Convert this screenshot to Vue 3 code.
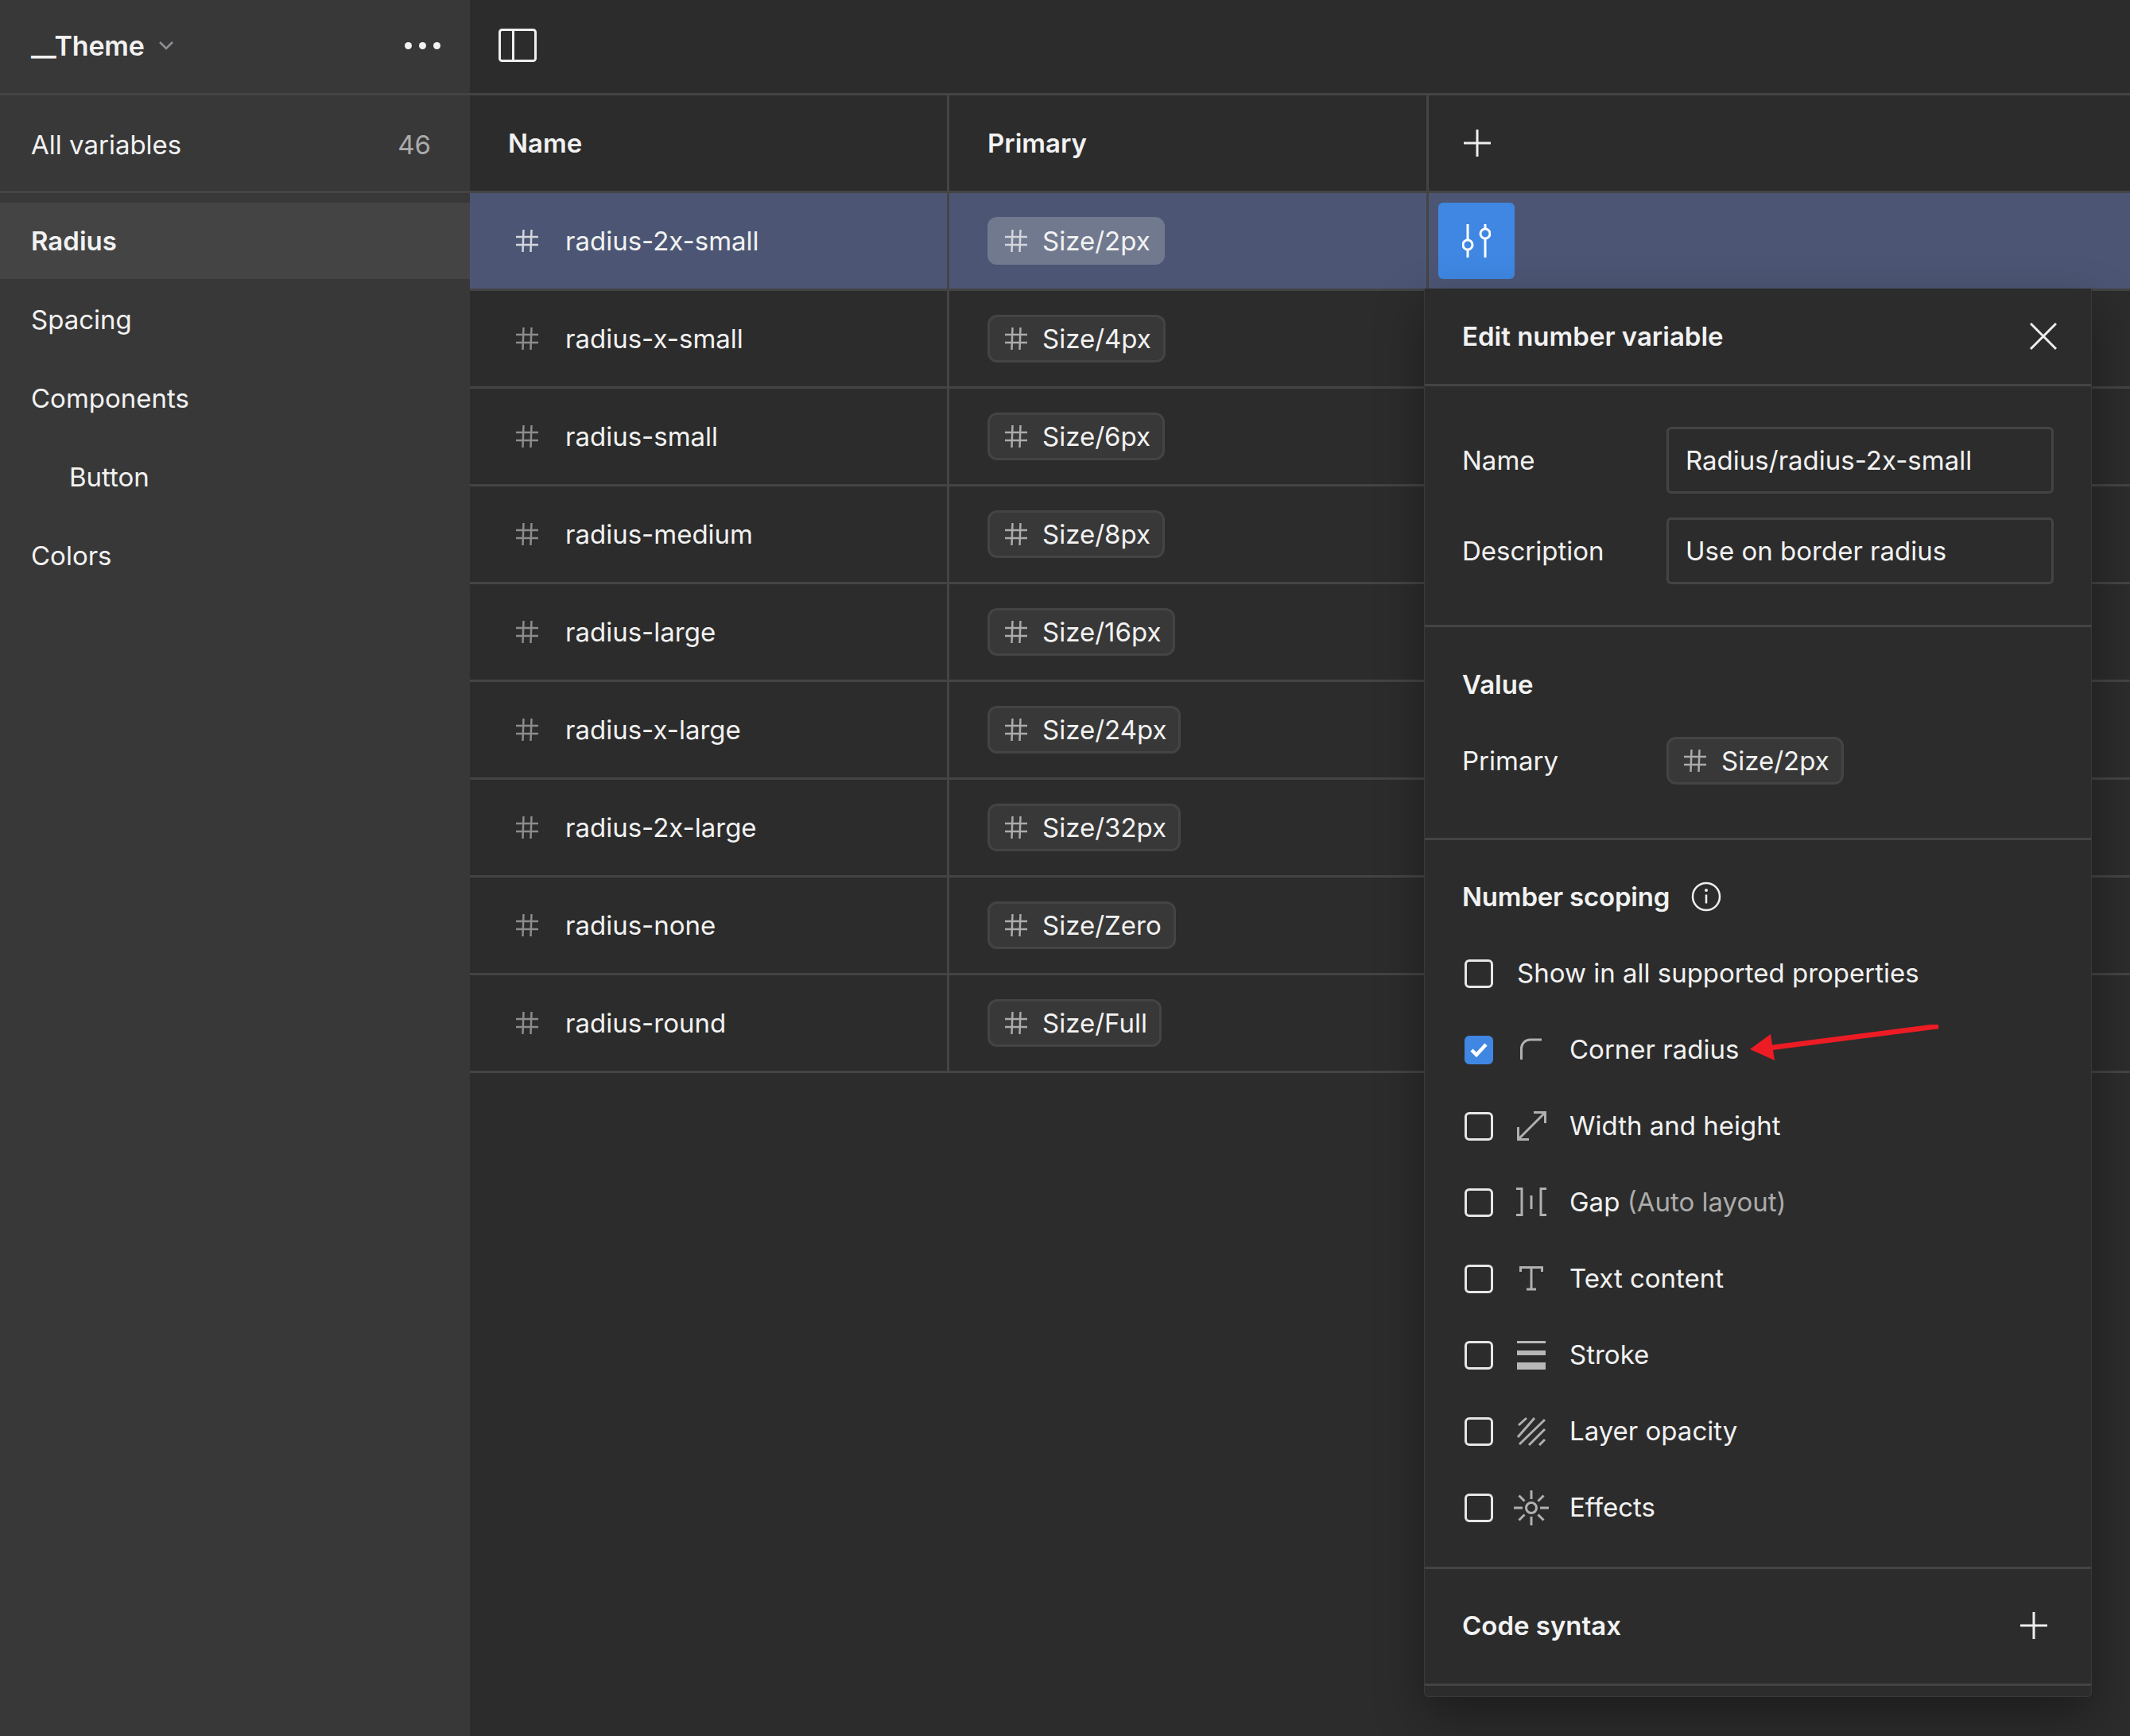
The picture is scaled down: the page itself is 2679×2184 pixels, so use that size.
<template>
  <div class="app">
    <aside class="sidebar">
      <div class="side-head">
        <span class="file-name">__Theme</span>
        <svg class="chevron" width="20" height="12" viewBox="0 0 20 12"><path d="M2 2l8 8 8-8" /></svg>
        <span class="dots"><i></i><i></i><i></i></span>
      </div>
      <div class="side-all">
        <span>All variables</span>
        <span class="count">46</span>
      </div>
      <nav class="nav">
        <div
          v-for="item in groups"
          :key="item.name"
          class="nav-item"
          :class="{ active: item.active, nested: item.nested }"
        >{{ item.name }}</div>
      </nav>
    </aside>

    <main class="main">
      <div class="topbar">
        <svg class="panel-icon" width="48" height="42" viewBox="0 0 48 42">
          <rect x="1.5" y="1.5" width="45" height="39" rx="3" />
          <path d="M18.5 1.5v39" />
        </svg>
      </div>

      <div class="row head">
        <div class="cell first"><b>Name</b></div>
        <div class="cell second"><b>Primary</b></div>
        <div class="cell third">
          <svg class="plus" width="34" height="34" viewBox="0 0 34 34"><path d="M17 0v34M0 17h34" /></svg>
        </div>
      </div>

      <div v-for="(v, i) in variables" :key="v.name" class="row" :class="{ selected: i === 0 }">
        <div class="cell first">
          <svg class="hash" width="30" height="30" viewBox="0 0 30 30"><path d="M10.5 1l-1 28M20.500 1l-1 28M1 10h28M1 20h28" /></svg>
          <span class="var-name">{{ v.name }}</span>
        </div>
        <div class="cell second">
          <span class="pill">
            <svg class="hash" width="30" height="30" viewBox="0 0 30 30"><path d="M10.5 1l-1 28M20.500 1l-1 28M1 10h28M1 20h28" /></svg>
            {{ v.value }}
          </span>
        </div>
        <div class="cell third">
          <button v-if="i === 0" class="edit-btn">
            <svg width="36" height="48" viewBox="0 0 36 48">
              <path d="M7 3v20M7 35v10M29 3v6M29 21v24" />
              <circle cx="7" cy="29" r="6" />
              <circle cx="29" cy="15" r="6" />
            </svg>
          </button>
        </div>
      </div>

      <section class="popup">
        <div class="pop-head">
          <b>Edit number variable</b>
          <svg class="close" width="34" height="34" viewBox="0 0 34 34"><path d="M1 1l32 32M33 1L1 33" /></svg>
        </div>

        <div class="pop-section fields">
          <div class="field">
            <label>Name</label>
            <div class="input">Radius/radius-2x-small</div>
          </div>
          <div class="field">
            <label>Description</label>
            <div class="input">Use on border radius</div>
          </div>
        </div>

        <div class="pop-section value">
          <b class="pop-title">Value</b>
          <div class="field">
            <label>Primary</label>
            <span class="pill">
              <svg class="hash" width="30" height="30" viewBox="0 0 30 30"><path d="M10.5 1l-1 28M20.500 1l-1 28M1 10h28M1 20h28" /></svg>
              Size/2px
            </span>
          </div>
        </div>

        <div class="pop-section scoping">
          <div class="pop-title scoping-title">
            <b>Number scoping</b>
            <svg class="info" width="38" height="38" viewBox="0 0 38 38">
              <circle cx="19" cy="19" r="17" />
              <path d="M19 16.500v11" />
              <circle class="dot" cx="19" cy="11" r="2" />
            </svg>
          </div>
          <div class="check-row show-all">
            <span class="check"></span>
            <span class="check-label">Show in all supported properties</span>
          </div>
          <div v-for="s in scopes" :key="s.label" class="check-row">
            <span class="check" :class="{ on: s.on }">
              <svg v-if="s.on" width="24" height="20" viewBox="0 0 24 20"><path d="M3 10l6 6L21 3" /></svg>
            </span>
            <svg class="scope-icon" width="48" height="48" viewBox="0 0 48 48">
              <template v-if="s.icon === 'corner'">
                <path d="M11.500 36V22a11 11 0 0 1 11-11H37" />
              </template>
              <template v-else-if="s.icon === 'size'">
                <path d="M8 40L40 8M27 6.500h14.500V20M7.500 25v15.500H21" />
              </template>
              <template v-else-if="s.icon === 'gap'">
                <path d="M5 6.500h7v33H5M24 15v17M43 6.500h-7v33h7" />
              </template>
              <template v-else-if="s.icon === 'text'">
                <path d="M10.500 15V9.500h27V15M24 9.500v27M18 37h12" />
              </template>
              <template v-else-if="s.icon === 'stroke'">
                <rect class="fill" x="6" y="6" width="36" height="3" />
                <rect class="fill" x="6" y="18" width="36" height="6" />
                <rect class="fill" x="6" y="33" width="36" height="9" />
              </template>
              <template v-else-if="s.icon === 'opacity'">
                <path d="M8 16L18 7M7 31L28 7M9 40L41 9M21 41L41 21M34 41l7-7" />
              </template>
              <template v-else>
                <circle cx="24" cy="24" r="6.500" />
                <path d="M24 2v11M24 35v11M2 24h11M35 24h11M8.500 8.500l7 7M32.500 32.500l7 7M39.500 8.500l-7 7M15.500 32.500l-7 7" />
              </template>
            </svg>
            <span class="check-label">{{ s.label }} <em v-if="s.note">{{ s.note }}</em></span>
          </div>
          <svg class="red-arrow" width="250" height="50" viewBox="0 0 250 50">
            <path class="shaft" d="M240 2L30 29" />
            <path class="head" d="M3 31L29 12l5 33z" />
          </svg>
        </div>

        <div class="pop-section code">
          <b>Code syntax</b>
          <svg class="plus" width="34" height="34" viewBox="0 0 34 34"><path d="M17 0v34M0 17h34" /></svg>
        </div>
      </section>
    </main>
  </div>
</template>

<script setup>
const groups = [
  { name: 'Radius', active: true },
  { name: 'Spacing' },
  { name: 'Components' },
  { name: 'Button', nested: true },
  { name: 'Colors' }
]

const variables = [
  { name: 'radius-2x-small', value: 'Size/2px' },
  { name: 'radius-x-small', value: 'Size/4px' },
  { name: 'radius-small', value: 'Size/6px' },
  { name: 'radius-medium', value: 'Size/8px' },
  { name: 'radius-large', value: 'Size/16px' },
  { name: 'radius-x-large', value: 'Size/24px' },
  { name: 'radius-2x-large', value: 'Size/32px' },
  { name: 'radius-none', value: 'Size/Zero' },
  { name: 'radius-round', value: 'Size/Full' }
]

const scopes = [
  { label: 'Corner radius', icon: 'corner', on: true },
  { label: 'Width and height', icon: 'size' },
  { label: 'Gap', note: '(Auto layout)', icon: 'gap' },
  { label: 'Text content', icon: 'text' },
  { label: 'Stroke', icon: 'stroke' },
  { label: 'Layer opacity', icon: 'opacity' },
  { label: 'Effects', icon: 'effects' }
]
</script>

<style scoped>
.app {
  display: flex;
  width: 2679px;
  height: 2184px;
  overflow: hidden;
  background: #2c2c2c;
  color: #f2f2f2;
  font-family: Inter, "Liberation Sans", sans-serif;
  font-size: 33px;
}

b {
  font-weight: 600;
}

svg {
  flex: none;
  fill: none;
}

.sidebar {
  width: 591px;
  flex: none;
  background: #383838;
}

.side-head {
  display: flex;
  align-items: center;
  height: 114px;
  padding: 0 37px 3px 39px;
  border-bottom: 3px solid #444;
}

.file-name {
  font-weight: 600;
  font-size: 34px;
  letter-spacing: -0.2px;
}

.chevron {
  margin-left: 17px;
}

.chevron path {
  stroke: #8f8f96;
  stroke-width: 2.5;
}

.dots {
  display: flex;
  gap: 9px;
  margin-left: auto;
}

.dots i {
  width: 9px;
  height: 9px;
  border-radius: 50%;
  background: #f2f2f2;
}

.side-all {
  display: flex;
  justify-content: space-between;
  align-items: center;
  height: 116px;
  padding: 4px 49px 0 39px;
  border-bottom: 3px solid #444;
}

.count {
  color: #ababab;
}

.nav {
  display: flex;
  flex-direction: column;
  gap: 3px;
  padding-top: 12px;
}

.nav-item {
  display: flex;
  align-items: center;
  height: 96px;
  padding-left: 39px;
}

.nav-item.active {
  background: #444;
  font-weight: 600;
}

.nav-item.nested {
  padding-left: 87px;
}

.main {
  position: relative;
  flex: 1;
}

.topbar {
  display: flex;
  align-items: center;
  height: 114px;
  padding: 0 0 3px 36px;
  border-bottom: 3px solid #444;
}

.panel-icon rect,
.panel-icon path {
  stroke: #eee;
  stroke-width: 3;
}

.row {
  display: flex;
  height: 120px;
  border-bottom: 3px solid #444;
}

.row.selected {
  background: #4c5674;
}

.row.selected .pill {
  background: #71798f;
  border-color: #71798f;
}

.row.selected .hash path {
  stroke: #d4d6dc;
}

.cell {
  display: flex;
  align-items: center;
  box-sizing: border-box;
}

.cell.first {
  width: 603px;
  padding-left: 48px;
  border-right: 3px solid #444;
}

.cell.second {
  width: 603px;
  padding-left: 48px;
  border-right: 3px solid #444;
}

.cell.third {
  flex: 1;
  padding-left: 12px;
}

.head .plus {
  margin-left: 32px;
}

.hash path {
  stroke: #8c8c8c;
  stroke-width: 2.500;
}

.cell.first .hash {
  margin-left: 9px;
  margin-right: 33px;
}

.pill {
  display: inline-flex;
  align-items: center;
  height: 60px;
  box-sizing: border-box;
  padding: 0 15px 0 18px;
  border: 3px solid #444;
  border-radius: 12px;
  background: #383838;
}

.pill .hash {
  margin-right: 18px;
}

.pill .hash path {
  stroke: #ababab;
}

.plus path {
  stroke: #eee;
  stroke-width: 3;
}

.edit-btn {
  display: flex;
  align-items: center;
  justify-content: center;
  width: 96px;
  height: 96px;
  padding: 0;
  border: none;
  border-radius: 6px;
  background: #3f87e2;
}

.edit-btn path,
.edit-btn circle {
  stroke: #fff;
  stroke-width: 3;
}

.popup {
  position: absolute;
  left: 1200px;
  top: 363px;
  width: 840px;
  height: 1772px;
  box-sizing: border-box;
  background: #2c2c2c;
  border: 1px solid #3a3a3a;
  border-top: none;
  border-radius: 0 0 6px 6px;
  box-shadow: 0 24px 60px rgba(0, 0, 0, 0.35);
}

.pop-head {
  display: flex;
  justify-content: space-between;
  align-items: center;
  height: 120px;
  padding: 0 43px 0 47px;
  border-bottom: 3px solid #444;
}

.close path {
  stroke: #eee;
  stroke-width: 3;
}

.pop-section {
  padding-left: 47px;
  padding-right: 47px;
  border-bottom: 3px solid #444;
}

.fields {
  display: flex;
  flex-direction: column;
  gap: 30px;
  padding-top: 51px;
  padding-bottom: 51px;
}

.field {
  display: flex;
  align-items: center;
}

.field label {
  width: 257px;
  flex: none;
}

.input {
  flex: 1;
  height: 84px;
  box-sizing: border-box;
  padding-left: 21px;
  border: 3px solid #444;
  border-radius: 6px;
  line-height: 78px;
}

.value {
  padding-top: 48px;
  padding-bottom: 67px;
}

.pop-title {
  display: block;
  height: 48px;
  line-height: 48px;
  margin-bottom: 42px;
}

.scoping {
  position: relative;
  display: flex;
  flex-direction: column;
  gap: 48px;
  padding-top: 47px;
  padding-bottom: 50px;
}

.scoping-title {
  display: flex;
  align-items: center;
  gap: 27px;
  margin-bottom: 1px;
  letter-spacing: -0.2px;
}

.info circle {
  stroke: #eee;
  stroke-width: 2.500;
}

.info path {
  stroke: #eee;
  stroke-width: 2.500;
}

.info .dot {
  fill: #eee;
  stroke: none;
}

.check-row {
  display: flex;
  align-items: center;
  height: 48px;
  padding-left: 3px;
}

.check-label {
  position: relative;
  top: -1px;
}

.check {
  display: flex;
  align-items: center;
  justify-content: center;
  width: 36px;
  height: 36px;
  box-sizing: border-box;
  margin-right: 24px;
  border: 3px solid #e6e6e6;
  border-radius: 6px;
}

.show-all .check {
  margin-right: 30px;
}

.check.on {
  background: #3f87e2;
  border-color: #3f87e2;
}

.check path {
  stroke: #fff;
  stroke-width: 4.500;
}

.scope-icon {
  margin-right: 24px;
}

.scope-icon path,
.scope-icon circle {
  stroke: #b0b0b0;
  stroke-width: 3;
}

.scope-icon .fill {
  fill: #b8b8b8;
}

.check-row em {
  font-style: normal;
  color: #ababab;
}

.red-arrow {
  position: absolute;
  left: 406px;
  top: 232px;
}

.red-arrow .shaft {
  stroke: #ed1c24;
  stroke-width: 6.5;
}

.red-arrow .head {
  fill: #ed1c24;
}

.code {
  display: flex;
  justify-content: space-between;
  align-items: center;
  height: 142px;
  padding-bottom: 2px;
  padding-right: 55px;
}
</style>

<style>
html,
body {
  background: #2c2c2c;
}
</style>
